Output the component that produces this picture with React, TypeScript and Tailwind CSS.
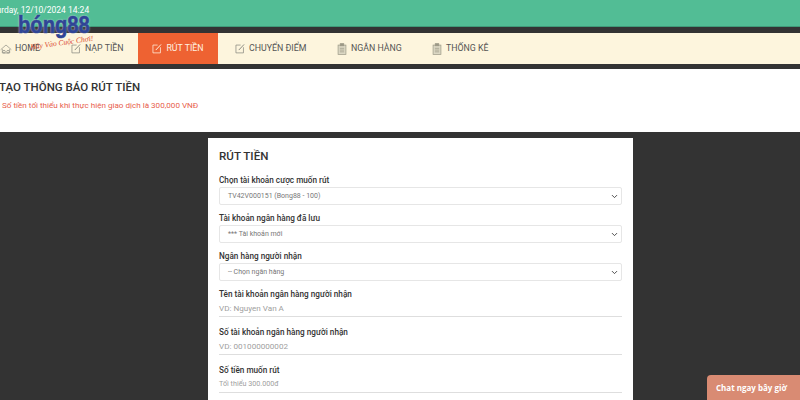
import React from 'react';
import { ChevronDown } from 'lucide-react';

const EditIcon = ({ className }: { className: string }) => (
  <svg viewBox="0 0 16 16" fill="none" stroke="currentColor" strokeWidth="1.2" className={className}>
    <path d="M13.5 6V15H1.5V2.5H9" />
    <path d="M6 10.5L14.5 1.5" strokeWidth="1.6" />
  </svg>
);

const ClipIcon = () => (
  <svg viewBox="0 0 14 16" className="w-[10px] h-[12px] text-[#9b9886]" fill="#dcd8c4" stroke="currentColor" strokeWidth="1">
    <rect x="1.5" y="2.5" width="11" height="13" />
    <rect x="4.5" y="0.5" width="5" height="3" fill="currentColor" />
    <path d="M4 7H10M4 9.5H10M4 12H10" />
  </svg>
);

const HomeIcon = () => (
  <svg viewBox="0 0 18 16" fill="none" stroke="currentColor" strokeWidth="1" className="w-[12px] h-[12px] text-[#8a8a80]">
    <path d="M1 9L9 2L17 9" />
    <path d="M3.5 8V14H14.5V8" />
    <circle cx="6" cy="12" r="2" />
    <circle cx="12" cy="12" r="2" />
  </svg>
);

const navItems = [
  { label: 'NẠP TIỀN', width: 'w-[94px]', icon: <EditIcon className="w-[10px] h-[11px] text-[#8a8a80]" /> },
  { label: 'RÚT TIỀN', width: 'w-[80px]', active: true, icon: <EditIcon className="w-[10px] h-[11px] text-[#fff1e0]" /> },
  { label: 'CHUYỂN ĐIỂM', width: 'w-[102px]', icon: <EditIcon className="w-[10px] h-[11px] text-[#8a8a80]" /> },
  { label: 'NGÂN HÀNG', width: 'w-[95px]', icon: <ClipIcon /> },
  { label: 'THỐNG KÊ', width: 'w-[90px]', icon: <ClipIcon /> },
];

const SelectField = ({ label, value }: { label: string; value: string }) => (
  <div className="h-[38px]">
    <div className="text-[8.2px] leading-[14px] font-medium text-[#333]">{label}</div>
    <div className="h-[18px] border border-[#e6e6e6] rounded-[2px] flex items-center justify-between pl-[8px] pr-[2px] text-[7px] text-[#777]">
      <span>{value}</span>
      <ChevronDown className="w-[9px] h-[9px] text-[#444]" strokeWidth={2.5} />
    </div>
  </div>
);

const InputField = ({ label, hint, small }: { label: string; hint: string; small?: boolean }) => (
  <div className="h-[38px]">
    <div className="text-[8.2px] leading-[14px] font-medium text-[#333]">{label}</div>
    <div className={`h-[16px] border-b border-[#dedede] flex items-center text-[#a0a0a0] ${small ? 'text-[7.2px]' : 'text-[8.1px]'}`}>
      {hint}
    </div>
  </div>
);

export default function App() {
  return (
    <div className="relative w-[800px] h-[400px] overflow-hidden bg-[#333333] font-['Roboto',sans-serif]">
      <div className="h-[27px] bg-[#52bd95] border-b border-[#3f9a78] text-white text-[8.5px] leading-[20px] -ml-[16px]">
        Saturday, 12/10/2024 14:24
      </div>
      <div className="h-[31px] mt-[6px] bg-[#fdf5dd] flex text-[8.8px] text-[#555]">
        <div className="w-[138px] flex items-center">
          <div className="w-[44px] flex items-center gap-[2px] shrink-0">
            <HomeIcon />
            <span className="ml-[1px]">HOME</span>
          </div>
          <div className="ml-[27px] flex items-center gap-[4px] shrink-0">
            {navItems[0].icon}
            <span>{navItems[0].label}</span>
          </div>
        </div>
        {navItems.slice(1).map((item) => (
          <div
            key={item.label}
            className={`${item.width} flex items-center gap-[4px] ${item.active ? 'bg-[#ee6232] text-[#fff1e0] justify-center' : 'pl-[17px]'}`}
          >
            {item.icon}
            <span>{item.label}</span>
          </div>
        ))}
      </div>
      <div className="h-[63px] mt-[5px] bg-white">
        <div className="-ml-[1px] pt-[10px] text-[11.5px] leading-[16px] font-medium text-[#333]">TẠO THÔNG BÁO RÚT TIỀN</div>
        <div className="pl-[2px] mt-[4px] text-[8.1px] leading-[12px] text-[#e8604c]">Số tiền tối thiểu khi thực hiện giao dịch là 300,000 VNĐ</div>
      </div>
      <div className="w-[425px] ml-[208px] mt-[6px] h-[280px] bg-white px-[11px]">
        <div className="pt-[10px] h-[35px] text-[11.6px] leading-[16px] font-medium text-[#333]">RÚT TIỀN</div>
        <SelectField label="Chọn tài khoản cược muốn rút" value="TV42V000151 (Bong88 - 100)" />
        <SelectField label="Tài khoản ngân hàng đã lưu" value="*** Tài khoản mới" />
        <SelectField label="Ngân hàng người nhận" value="-- Chọn ngân hàng" />
        <InputField label="Tên tài khoản ngân hàng người nhận" hint="VD: Nguyen Van A" />
        <InputField label="Số tài khoản ngân hàng người nhận" hint="VD: 001000000002" />
        <InputField label="Số tiền muốn rút" hint="Tối thiểu 300.000đ" small />
      </div>

      {/* logo sits over the top bars */}
      <div className="absolute left-[18px] top-[13px] leading-none">
        <div className="origin-left scale-x-[0.84] text-[24px] leading-[24px] font-bold font-['Liberation_Sans',sans-serif] text-[#2f4595] [-webkit-text-stroke:0.7px_#2f4595] [text-shadow:0_0_2px_#ffffff]">
          bóng88
        </div>
        <div className="ml-[12px] mt-[1px] w-[64px] -rotate-[8deg] text-[7.5px] leading-[9px] italic font-['Liberation_Serif',serif] text-[#d8432c]">
          Hãy Vào Cuộc Chơi!
        </div>
      </div>

      <div className="absolute right-0 bottom-0 w-[93px] h-[25px] bg-[#d98b73] rounded-tl-[4px] text-white text-[8px] font-bold font-['Open_Sans',sans-serif] flex items-center pl-[9px]">
        Chat ngay bây giờ
      </div>
    </div>
  );
}
